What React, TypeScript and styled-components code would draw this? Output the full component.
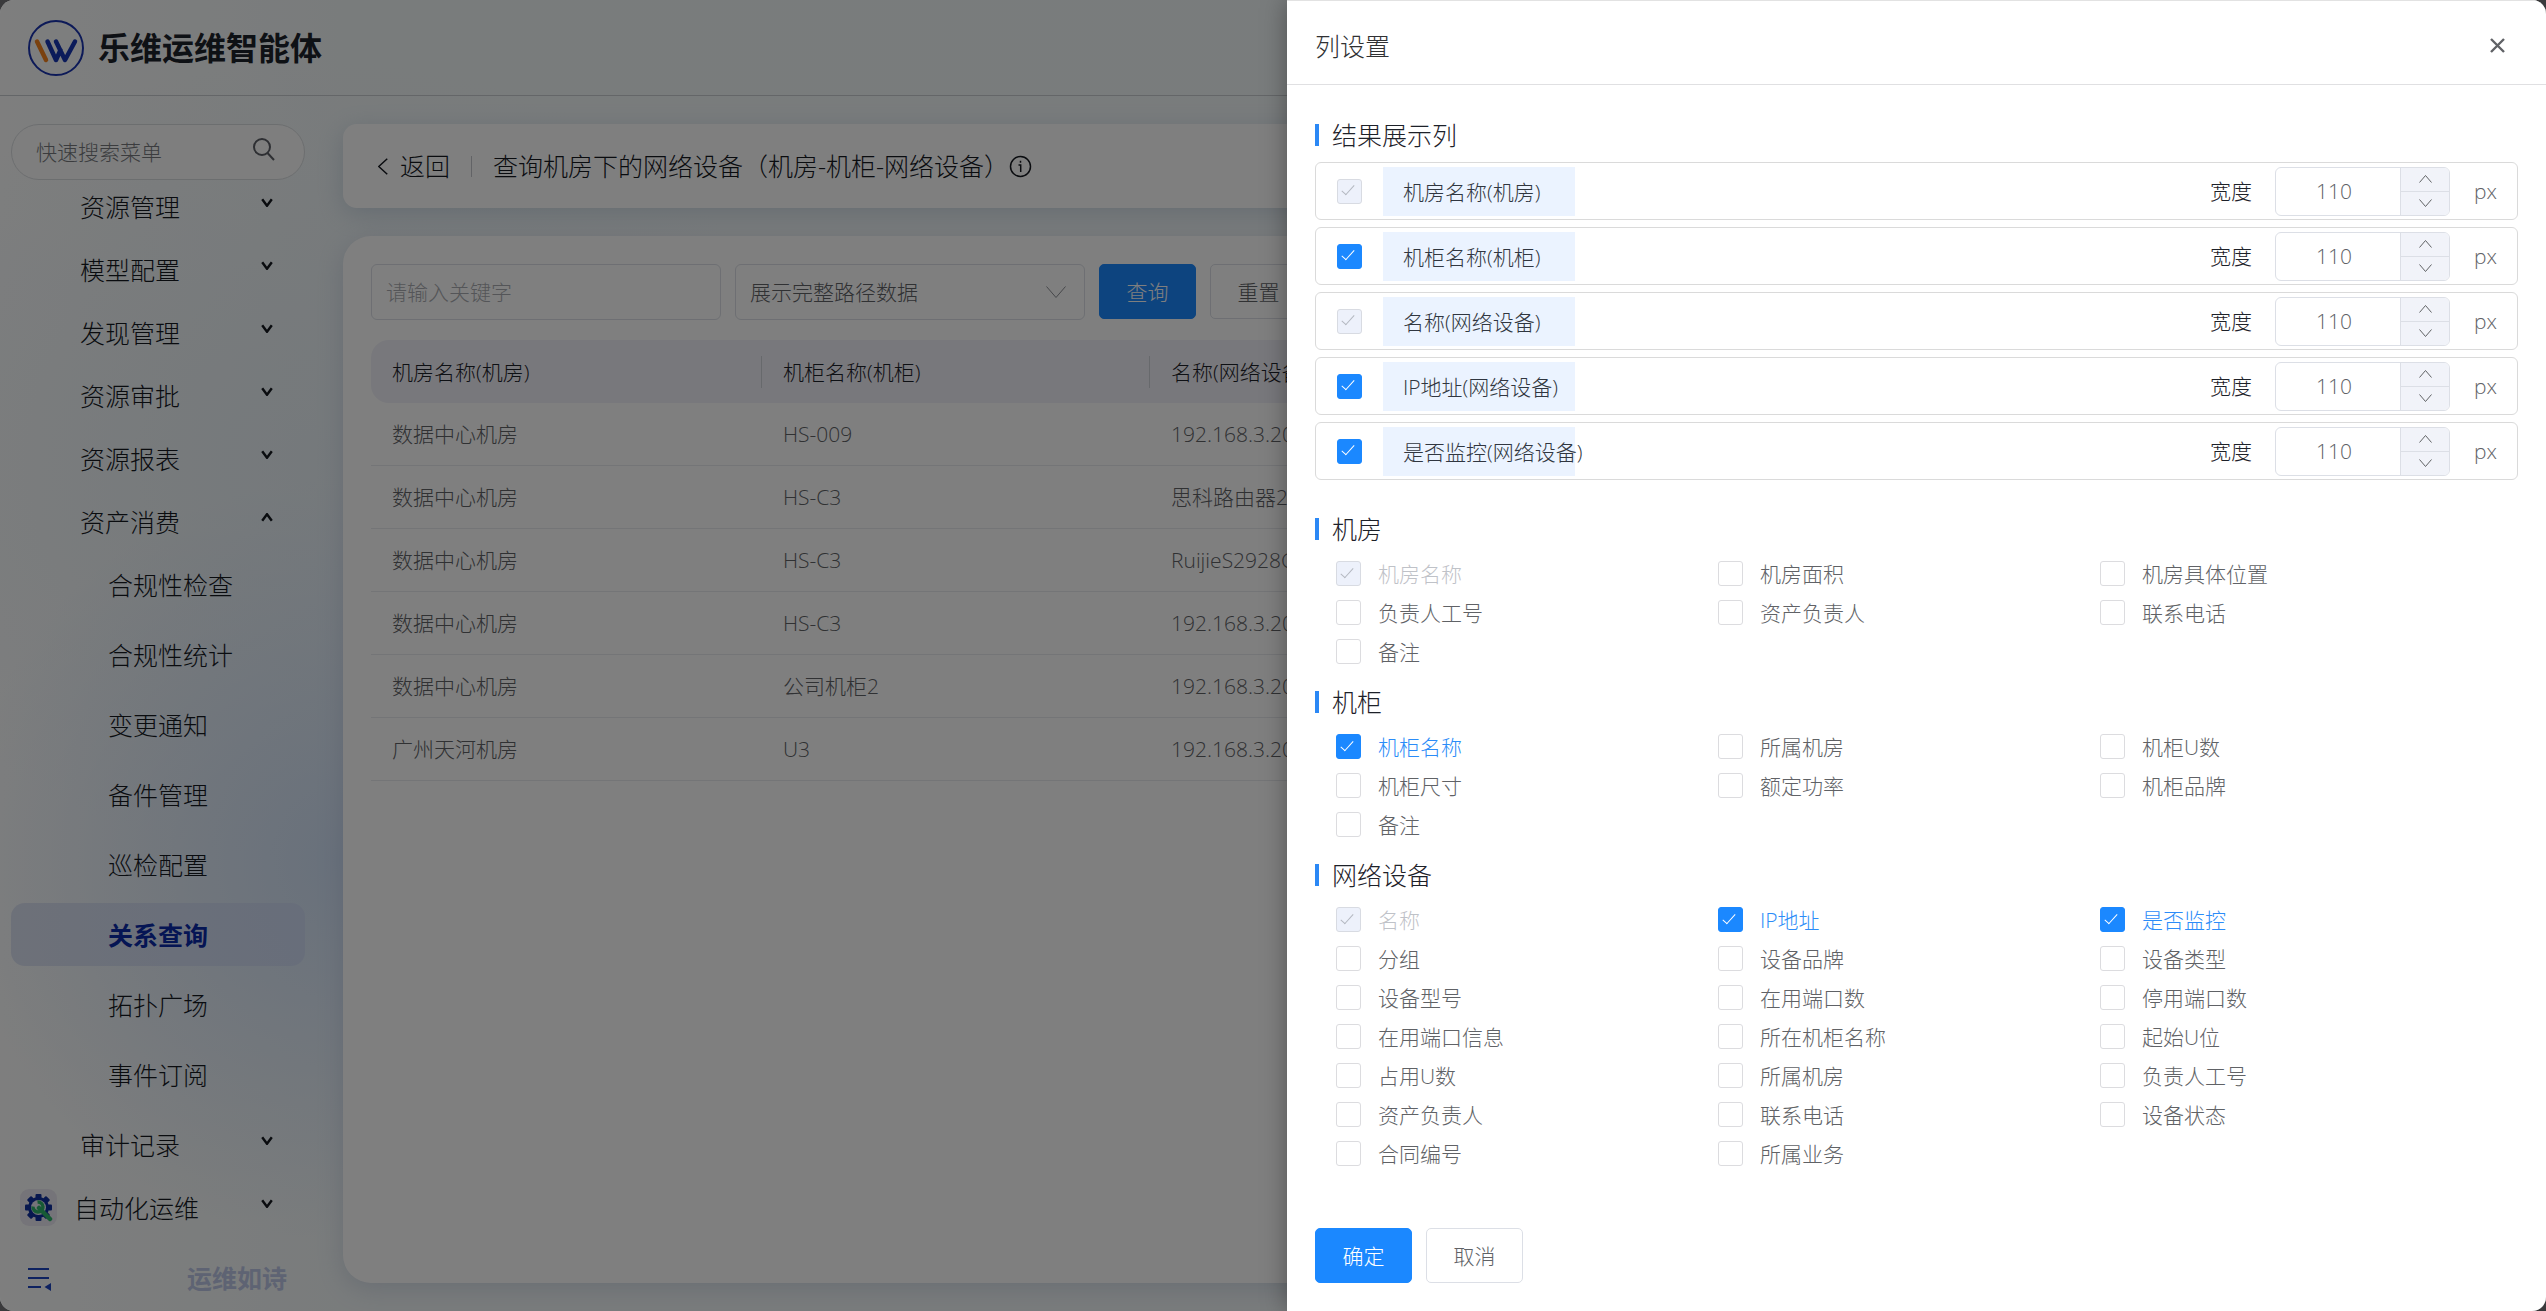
import React from 'react';
import styled, { createGlobalStyle, css } from 'styled-components';

const Global = createGlobalStyle`
  *, *::before, *::after { box-sizing: border-box; }
  html, body { margin: 0; height: 100%; }
  #root { height: 100%; }
  body {
    background: #3a3a3c;
    font-family: "Open Sans", "Noto Sans CJK SC", sans-serif;
    font-weight: 300;
    font-size: 21px;
    line-height: 32px;
    color: #606266;
  }
  button, input, select { font: inherit; color: inherit; margin: 0; }
  button { cursor: pointer; }
  h1, h2, ul { margin: 0; padding: 0; font-weight: inherit; }
  ul { list-style: none; }
`;

const Shell = styled.div`
  position: relative;
  display: flex;
  flex-direction: column;
  height: 100vh;
  overflow: hidden;
  border-radius: 14px;
  background:
    radial-gradient(ellipse 380px 380px at 340px 860px, rgba(204, 222, 247, 0.85), rgba(204, 222, 247, 0) 100%),
    radial-gradient(ellipse 500px 400px at 320px 460px, rgba(232, 241, 247, 0.8), rgba(232, 241, 247, 0) 100%),
    linear-gradient(90deg, #fcfdfd, #f3f8f9 342px, #f3f8fa);
`;

const TopBar = styled.header`
  display: flex;
  align-items: center;
  gap: 14px;
  height: 96px;
  flex: none;
  padding: 0 28px;
  border-bottom: 1px solid #c8ccd0;
`;

const Brand = styled.h1`
  font-size: 32px;
  line-height: 40px;
  font-weight: 700;
  color: #1c222b;
`;

const Body = styled.div`
  display: flex;
  flex: 1;
  min-height: 0;
`;

const Sidebar = styled.aside`
  display: flex;
  flex-direction: column;
  width: 343px;
  flex: none;
  padding: 28px 38px 0 11px;
`;

const SearchBox = styled.label`
  display: flex;
  align-items: center;
  flex: none;
  height: 56px;
  padding: 0 28px 0 24px;
  border: 1px solid #d9dcdf;
  border-radius: 28px;
  background: #fcfdfd;
  input {
    flex: 1;
    min-width: 0;
    border: 0;
    padding: 0;
    background: none;
    outline: none;
  }
  input::placeholder { color: #77797d; opacity: 1; }
  svg { margin-bottom: 6px; }
`;

const Menu = styled.nav`
  flex: 1;
  min-height: 0;
  margin-top: -5px;
  overflow: hidden;
`;

const MenuButton = styled.button<{ $level: number; $active?: boolean }>`
  display: flex;
  align-items: center;
  justify-content: space-between;
  width: 100%;
  height: 63px;
  border: 0;
  border-radius: 14px;
  background: none;
  padding: 0 32px 0 ${p => (p.$level === 0 ? 9 : p.$level === 1 ? 69 : 97)}px;
  font-size: 25px;
  line-height: 36px;
  color: #14181f;
  text-align: left;
  > svg { margin-bottom: 8px; }
  ${p => p.$level === 2 && css`margin-bottom: 7px;`}
  ${p => p.$active && css`
    background: linear-gradient(90deg, rgba(212, 220, 240, 0.8), rgba(206, 218, 245, 0.8));
    color: #0a2aa8;
    font-weight: 700;
  `}
`;

const MenuLabel = styled.span`
  display: flex;
  align-items: center;
  gap: 17px;
`;

const AppIcon = styled.span`
  display: grid;
  place-items: center;
  width: 37px;
  height: 37px;
  border-radius: 9px;
  background: #ebe9f2;
`;

const SideFooter = styled.div`
  display: flex;
  align-items: center;
  justify-content: space-between;
  height: 64px;
  flex: none;
  padding: 0 18px 2px 17px;
  font-size: 25px;
  font-weight: 700;
  color: #bcc7e6;
`;

const BareButton = styled.button`
  display: inline-flex;
  align-items: center;
  border: 0;
  padding: 0;
  background: none;
`;

const Main = styled.main`
  display: flex;
  flex-direction: column;
  gap: 28px;
  flex: 1;
  min-width: 0;
  padding: 28px 28px 28px 0;
`;

const TitleCard = styled.section`
  display: flex;
  align-items: center;
  height: 84px;
  flex: none;
  padding: 0 35px;
  border-radius: 14px;
  background: #fff;
  box-shadow: 0 6px 24px rgba(120, 150, 180, 0.3);
  font-size: 25px;
  line-height: 36px;
  color: #14181f;
`;

const BackButton = styled(BareButton)`
  gap: 12px;
`;

const Divider = styled.span`
  width: 1px;
  height: 21px;
  margin: 0 21px;
  background: #c4c7cc;
`;

const ContentCard = styled.section`
  flex: 1;
  padding: 28px;
  border-radius: 28px;
  background: #fff;
  box-shadow: 0 6px 24px rgba(140, 155, 190, 0.3);
`;

const Toolbar = styled.div`
  display: flex;
  gap: 14px;
  margin-bottom: 20px;
`;

const boxed = css`
  height: 56px;
  border: 1px solid #dcdfe6;
  border-radius: 6px;
  background: #fff;
`;

const Keyword = styled.input`
  ${boxed}
  width: 350px;
  padding: 0 14px;
  outline: none;
  &::placeholder { color: #a9abb0; opacity: 1; }
`;

const SelectWrap = styled.span`
  ${boxed}
  display: flex;
  align-items: center;
  width: 350px;
  padding-right: 18px;
  select {
    flex: 1;
    height: 100%;
    padding: 0 0 0 14px;
    border: 0;
    outline: none;
    background: none;
    appearance: none;
  }
  svg { flex: none; }
`;

const Button = styled.button<{ $primary?: boolean }>`
  height: 55px;
  width: 97px;
  padding: 0;
  border: 1px solid ${p => (p.$primary ? '#1b88ff' : '#dcdfe6')};
  border-radius: 5px;
  background: ${p => (p.$primary ? '#1b88ff' : '#fff')};
  color: ${p => (p.$primary ? '#fff' : '#606266')};
`;

const Table = styled.table`
  width: 100%;
  table-layout: fixed;
  border-collapse: separate;
  border-spacing: 0;
  th, td {
    height: 63px;
    padding: 0 21px;
    text-align: left;
    white-space: nowrap;
    font-weight: 300;
  }
  th {
    background: #f0f1f8;
    color: #1d2129;
  }
  th:first-child { border-radius: 18px 0 0 18px; }
  th:last-child { border-radius: 0 18px 18px 0; }
  td { border-bottom: 1px solid #e8eaee; }
`;

const Col = styled.col<{ $width?: number }>`
  width: ${p => (p.$width ? `${p.$width}px` : 'auto')};
`;

const HeadCell = styled.span`
  display: block;
  margin-right: -21px;
  border-right: 1px solid #cfd2d9;
`;

const Mask = styled.div`
  position: absolute;
  inset: 0;
  z-index: 2;
  display: flex;
  justify-content: flex-end;
  background: rgba(0, 0, 0, 0.5);
`;

const Drawer = styled.section`
  display: flex;
  flex-direction: column;
  width: 49.45%;
  border-top: 1px solid #e2e2e2;
  background: #fff;
  box-shadow: 0 0 24px rgba(0, 0, 0, 0.35);
`;

const DrawerHead = styled.header`
  display: flex;
  align-items: center;
  justify-content: space-between;
  height: 84px;
  flex: none;
  padding: 6px 41px 0 28px;
  border-bottom: 1px solid #e0e0e2;
  h2 {
    font-size: 25px;
    line-height: 36px;
    color: #303133;
  }
`;

const DrawerBody = styled.div`
  flex: 1;
  padding: 32px 28px 0;
`;

const SectionTitle = styled.h2`
  display: flex;
  align-items: center;
  gap: 13px;
  height: 36px;
  font-size: 25px;
  line-height: 36px;
  color: #1d2129;
  &::before {
    content: '';
    width: 4px;
    height: 22px;
    background: #2b88f5;
  }
`;

const ColumnList = styled.ul`
  display: grid;
  gap: 7px;
  margin: 9px 0 31px;
`;

const ColumnRow = styled.li`
  display: flex;
  align-items: center;
  height: 58px;
  padding: 0 20px 0 21px;
  border: 1px solid #dadada;
  border-radius: 6px;
`;

const Check = styled.input`
  appearance: none;
  display: grid;
  place-items: center;
  width: 25px;
  height: 25px;
  flex: none;
  border: 1px solid #dcdcdf;
  border-radius: 3px;
  background: #fff;
  &::after {
    content: '';
    width: 6px;
    height: 13px;
    margin: -5px 3px 0 0;
    border: solid transparent;
    border-width: 0 1px 1px 0;
    transform: rotate(42deg);
  }
  &:checked { background: #1b88ff; border-color: #1b88ff; }
  &:checked::after { border-color: #fff; }
  &:disabled { background: #edf1fb; border-color: #d8dbe2; }
  &:disabled::after { border-color: #b4b8c0; }
`;

const Tag = styled.label`
  width: 192px;
  height: 49px;
  margin-left: 21px;
  padding-left: 20px;
  background: #ebf3ff;
  color: #303640;
  line-height: 50px;
  white-space: nowrap;
`;

const WidthLabel = styled.label`
  margin-left: auto;
  margin-right: 23px;
  color: #1d2129;
`;

const Stepper = styled.span`
  display: grid;
  grid-template-columns: 1fr 49px;
  width: 175px;
  height: 49px;
  border: 1px solid #dcdfe6;
  border-radius: 6px;
  overflow: hidden;
  input {
    min-width: 0;
    border: 0;
    padding: 0 16px 0 8px;
    background: none;
    text-align: center;
    outline: none;
  }
`;

const Steps = styled.span`
  display: grid;
  grid-template-rows: 1fr 1fr;
  border-left: 1px solid #dcdfe6;
  background: #f1f3f9;
  button {
    display: grid;
    place-items: center;
    border: 0;
    padding: 0;
    background: none;
  }
  button + button { border-top: 1px solid #dcdfe6; }
`;

const Unit = styled.span`
  margin-left: 24px;
`;

const Options = styled.div`
  display: grid;
  grid-template-columns: repeat(3, 1fr);
  grid-auto-rows: 39px;
  margin: 7px 0 13px;
  padding: 0 36px 0 21px;
`;

const Option = styled.label<{ $state: State }>`
  display: flex;
  align-items: center;
  gap: 17px;
  color: ${p => (p.$state === 'on' ? '#2b8cf8' : p.$state === 'locked' ? '#bfc2c8' : '#606266')};
`;

const DrawerFoot = styled.footer`
  display: flex;
  gap: 14px;
  flex: none;
  padding: 0 28px 28px;
`;

type State = 'on' | 'off' | 'locked';

type IconProps = { dir: 'up' | 'down' | 'left'; w: number; h: number; stroke: number; color?: string };

const Chevron = ({ dir, w, h, stroke, color = 'currentColor' }: IconProps) => {
  const p = stroke / 2;
  const pts =
    dir === 'down' ? [[p, p], [w / 2, h - p], [w - p, p]]
    : dir === 'up' ? [[p, h - p], [w / 2, p], [w - p, h - p]]
    : [[w - p, p], [p, h / 2], [w - p, h - p]];
  return (
    <svg width={w} height={h} aria-hidden="true">
      <polyline points={pts.map(a => a.join(',')).join(' ')} fill="none" stroke={color} strokeWidth={stroke} />
    </svg>
  );
};

const Logo = () => (
  <svg width="56" height="56" viewBox="0 0 56 56" aria-hidden="true">
    <circle cx="28" cy="28" r="27" fill="none" stroke="#1b35b0" strokeWidth="2" />
    <g fill="none" strokeLinecap="round" strokeLinejoin="round" strokeWidth="4.500">
      <path d="M9 21.500 L18 40" stroke="#f5821f" />
      <path d="M19.500 21.500 L28 40 L32.500 30 M28 21.500 L37 40 L47 21.500" stroke="#1637b5" />
    </g>
  </svg>
);

const SearchIcon = () => (
  <svg width="24" height="24" viewBox="0 0 24 24" fill="none" stroke="#5c5f66" strokeWidth="2" aria-hidden="true">
    <circle cx="10" cy="10" r="8" />
    <path d="M15.500 16 L22 23" />
  </svg>
);

const InfoIcon = () => (
  <svg width="23" height="23" viewBox="0 0 23 23" fill="none" stroke="#14181f" strokeWidth="1.500" aria-hidden="true">
    <circle cx="11.500" cy="11.500" r="10" />
    <path d="M9.500 10 H11.700 V17 M11.500 5.800 V7.800" />
  </svg>
);

const GearIcon = () => (
  <svg width="29" height="29" viewBox="0 0 29 29" aria-hidden="true">
    <g fill="#0f2f9e">
      {[0, 45, 90, 135].map(a => (
        <rect key={a} x="11.500" y="1" width="6" height="27" rx="1" transform={`rotate(${a} 14.500 14.500)`} />
      ))}
      <circle cx="14.500" cy="14.500" r="10.500" />
    </g>
    <circle cx="14.500" cy="14.500" r="7.500" fill="#ebe9f2" />
    <path d="M15 15 L26 26" stroke="#2fb56b" strokeWidth="4.500" strokeLinecap="round" />
    <path d="M13.500 9 A5 5 0 1 1 9 13.500" fill="none" stroke="#2fb56b" strokeWidth="3.500" />
  </svg>
);

const CollapseIcon = () => (
  <svg width="24" height="27" viewBox="0 0 24 27" aria-hidden="true">
    <path d="M0 4 H21 M0 13 H21 M0 22 H13" stroke="#1d45c0" strokeWidth="2" />
    <path d="M23 18 V26 L16.500 22 Z" fill="#1d45c0" />
  </svg>
);

const CloseIcon = () => (
  <svg width="15" height="15" viewBox="0 0 15 15" aria-hidden="true">
    <path d="M1 1 L14 14 M14 1 L1 14" stroke="#606266" strokeWidth="2.400" />
  </svg>
);

type Item = { label: string; level: number; open?: boolean; active?: boolean };

const MENU: Item[] = [
  { label: '资源管理', level: 1 },
  { label: '模型配置', level: 1 },
  { label: '发现管理', level: 1 },
  { label: '资源审批', level: 1 },
  { label: '资源报表', level: 1 },
  { label: '资产消费', level: 1, open: true },
  { label: '合规性检查', level: 2 },
  { label: '合规性统计', level: 2 },
  { label: '变更通知', level: 2 },
  { label: '备件管理', level: 2 },
  { label: '巡检配置', level: 2 },
  { label: '关系查询', level: 2, active: true },
  { label: '拓扑广场', level: 2 },
  { label: '事件订阅', level: 2 },
  { label: '审计记录', level: 1 },
  { label: '自动化运维', level: 0 },
];

const TABLE_COLUMNS = [
  { title: '机房名称(机房)', width: 391 },
  { title: '机柜名称(机柜)', width: 388 },
  { title: '名称(网络设备)' },
];

const ROWS = [
  ['数据中心机房', 'HS-009', '192.168.3.206'],
  ['数据中心机房', 'HS-C3', '思科路由器2'],
  ['数据中心机房', 'HS-C3', 'RuijieS2928G'],
  ['数据中心机房', 'HS-C3', '192.168.3.205'],
  ['数据中心机房', '公司机柜2', '192.168.3.202'],
  ['广州天河机房', 'U3', '192.168.3.208'],
];

const COLUMNS: { label: string; state: State }[] = [
  { label: '机房名称(机房)', state: 'locked' },
  { label: '机柜名称(机柜)', state: 'on' },
  { label: '名称(网络设备)', state: 'locked' },
  { label: 'IP地址(网络设备)', state: 'on' },
  { label: '是否监控(网络设备)', state: 'on' },
];

const GROUPS: { title: string; locked: string[]; on: string[]; fields: string[] }[] = [
  {
    title: '机房', locked: ['机房名称'], on: [],
    fields: ['机房名称', '机房面积', '机房具体位置', '负责人工号', '资产负责人', '联系电话', '备注'],
  },
  {
    title: '机柜', locked: [], on: ['机柜名称'],
    fields: ['机柜名称', '所属机房', '机柜U数', '机柜尺寸', '额定功率', '机柜品牌', '备注'],
  },
  {
    title: '网络设备', locked: ['名称'], on: ['IP地址', '是否监控'],
    fields: [
      '名称', 'IP地址', '是否监控', '分组', '设备品牌', '设备类型', '设备型号', '在用端口数', '停用端口数',
      '在用端口信息', '所在机柜名称', '起始U位', '占用U数', '所属机房', '负责人工号',
      '资产负责人', '联系电话', '设备状态', '合同编号', '所属业务',
    ],
  },
];

export default function App() {
  return (
    <>
      <Global />
      <Shell>
        <TopBar>
          <Logo />
          <Brand>乐维运维智能体</Brand>
        </TopBar>
        <Body>
          <Sidebar>
            <SearchBox>
              <input placeholder="快速搜索菜单" aria-label="快速搜索菜单" />
              <SearchIcon />
            </SearchBox>
            <Menu>
              {MENU.map(m => (
                <MenuButton key={m.label} $level={m.level} $active={m.active}>
                  <MenuLabel>
                    {m.level === 0 && <AppIcon><GearIcon /></AppIcon>}
                    {m.label}
                  </MenuLabel>
                  {m.level < 2 && <Chevron dir={m.open ? 'up' : 'down'} w={12} h={9} stroke={2.4} />}
                </MenuButton>
              ))}
            </Menu>
            <SideFooter>
              <BareButton aria-label="收起菜单"><CollapseIcon /></BareButton>
              <span>运维如诗</span>
            </SideFooter>
          </Sidebar>
          <Main>
            <TitleCard>
              <BackButton><Chevron dir="left" w={10} h={17} stroke={1.5} />返回</BackButton>
              <Divider />
              <span>查询机房下的网络设备（机房-机柜-网络设备）</span>
              <InfoIcon />
            </TitleCard>
            <ContentCard>
              <Toolbar>
                <Keyword placeholder="请输入关键字" aria-label="请输入关键字" />
                <SelectWrap>
                  <select aria-label="展示方式"><option>展示完整路径数据</option></select>
                  <Chevron dir="down" w={20} h={12} stroke={1} color="#8b8e94" />
                </SelectWrap>
                <Button $primary>查询</Button>
                <Button>重置</Button>
              </Toolbar>
              <Table>
                <colgroup>
                  {TABLE_COLUMNS.map(c => <Col key={c.title} $width={c.width} />)}
                </colgroup>
                <thead>
                  <tr>{TABLE_COLUMNS.map(c => <th key={c.title}><HeadCell>{c.title}</HeadCell></th>)}</tr>
                </thead>
                <tbody>
                  {ROWS.map((r, i) => (
                    <tr key={i}>
                      {r.map((c, j) => <td key={j}>{c}</td>)}
                    </tr>
                  ))}
                </tbody>
              </Table>
            </ContentCard>
          </Main>
        </Body>
        <Mask>
          <Drawer role="dialog" aria-label="列设置">
            <DrawerHead>
              <h2>列设置</h2>
              <BareButton aria-label="关闭"><CloseIcon /></BareButton>
            </DrawerHead>
            <DrawerBody>
              <SectionTitle>结果展示列</SectionTitle>
              <ColumnList>
                {COLUMNS.map((c, i) => (
                  <ColumnRow key={c.label}>
                    <Check type="checkbox" id={`col-${i}`} defaultChecked={c.state !== 'off'} disabled={c.state === 'locked'} />
                    <Tag htmlFor={`col-${i}`}>{c.label}</Tag>
                    <WidthLabel htmlFor={`width-${i}`}>宽度</WidthLabel>
                    <Stepper>
                      <input id={`width-${i}`} defaultValue="110" />
                      <Steps>
                        <button aria-label="增加"><Chevron dir="up" w={13} h={8} stroke={1} /></button>
                        <button aria-label="减少"><Chevron dir="down" w={13} h={8} stroke={1} /></button>
                      </Steps>
                    </Stepper>
                    <Unit>px</Unit>
                  </ColumnRow>
                ))}
              </ColumnList>
              {GROUPS.map(g => (
                <React.Fragment key={g.title}>
                  <SectionTitle>{g.title}</SectionTitle>
                  <Options>
                    {g.fields.map(f => {
                      const state: State = g.locked.includes(f) ? 'locked' : g.on.includes(f) ? 'on' : 'off';
                      return (
                        <Option key={f} $state={state}>
                          <Check type="checkbox" defaultChecked={state !== 'off'} disabled={state === 'locked'} />
                          {f}
                        </Option>
                      );
                    })}
                  </Options>
                </React.Fragment>
              ))}
            </DrawerBody>
            <DrawerFoot>
              <Button $primary>确定</Button>
              <Button>取消</Button>
            </DrawerFoot>
          </Drawer>
        </Mask>
      </Shell>
    </>
  );
}
